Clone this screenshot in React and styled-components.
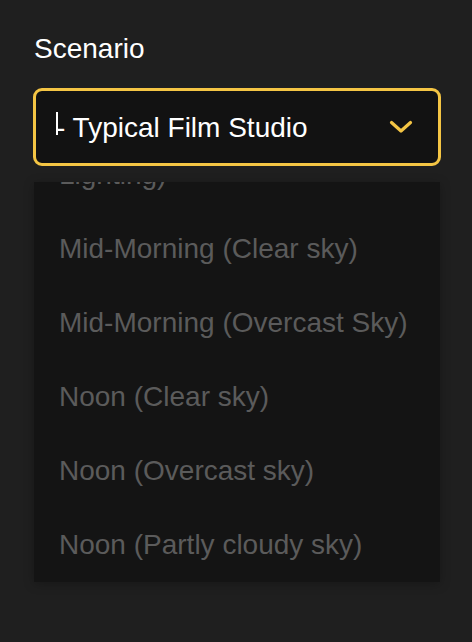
import React, { useLayoutEffect, useRef } from "react";
import styled, { createGlobalStyle } from "styled-components";

const Global = createGlobalStyle`
  html, body { margin: 0; padding: 0; background: #1f1f1f; }
  body { font-family: "Liberation Sans", Arial, Helvetica, sans-serif; }
  * { box-sizing: border-box; }
`;

const Page = styled.div`
  width: 472px;
  height: 642px;
  padding: 33px 31px 0 33px;
  background: #1f1f1f;
  overflow: hidden;
`;

const Label = styled.div`
  font-size: 28px;
  line-height: 32px;
  color: #ffffff;
  padding-left: 1px;
  margin-bottom: 23px;
`;

const SelectBox = styled.div`
  height: 78px;
  border: 3px solid #f4c544;
  border-radius: 9px;
  background: #121212;
  display: flex;
  align-items: center;
  padding: 0 25px 0 20px;
`;

const Value = styled.div`
  flex: 1;
  position: relative;
  margin-top: 2px;
  font-size: 28px;
  line-height: 32px;
  color: #ffffff;
  white-space: nowrap;
`;

const Caret = styled.span`
  position: absolute;
  left: 0;
  top: 0;
  width: 2px;
  height: 23px;
  background: #ffffff;
`;

const Chevron = styled.svg`
  width: 24px;
  height: 14px;
  flex: none;
`;

const Menu = styled.ul`
  list-style: none;
  margin: 16px 1px 0;
  padding: 0;
  height: 400px;
  overflow-y: auto;
  background: #141414;
  box-shadow: 0 2px 10px rgba(0, 0, 0, 0.25);
  scrollbar-width: none;
  &::-webkit-scrollbar { display: none; }
`;

const Option = styled.li`
  padding: 21px 25px;
  font-size: 28px;
  line-height: 32px;
  color: #5b5b5b;
`;

const options = [
  "Typical Film Studio",
  "Sunset (Warm, Low-Angle Lighting)",
  "Mid-Morning (Clear sky)",
  "Mid-Morning (Overcast Sky)",
  "Noon (Clear sky)",
  "Noon (Overcast sky)",
  "Noon (Partly cloudy sky)",
];

export default function App() {
  const menuRef = useRef(null);
  useLayoutEffect(() => {
    if (menuRef.current) menuRef.current.scrollTop = menuRef.current.scrollHeight;
  }, []);
  return (
    <Page>
      <Global />
      <Label>Scenario</Label>
      <SelectBox>
        <Value>
          <Caret />- Typical Film Studio
        </Value>
        <Chevron viewBox="0 0 24 14">
          <path d="M2.5 2.5 L12 11 L21.5 2.5" fill="none" stroke="#f4c544" strokeWidth="3.2" strokeLinecap="round" strokeLinejoin="round" />
        </Chevron>
      </SelectBox>
      <Menu ref={menuRef}>
        {options.map((o) => (
          <Option key={o}>{o}</Option>
        ))}
      </Menu>
    </Page>
  );
}
